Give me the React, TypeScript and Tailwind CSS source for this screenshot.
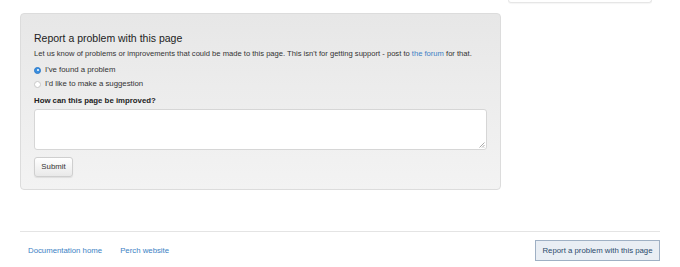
export default function App() {
  return (
    <div className="w-[680px] h-[267px] overflow-hidden bg-white text-[#333] font-['Liberation_Sans',Arial,sans-serif]">
      <div className="ml-[508px] w-[144px] h-[3px] border border-t-0 border-[#e6e6e6] rounded-b-[3px] shadow-[0_1px_1px_rgba(0,0,0,0.04)]" />

      <div className="ml-[20px] mt-[10px] w-[481px] h-[177px] rounded-[4px] border border-[#dcdcdc] bg-gradient-to-b from-[#e7e7e7] to-[#f3f3f3] px-[13px] pt-[18px]">
        <h2 className="text-[10.5px] leading-[12px] text-[#222]">Report a problem with this page</h2>
        <p className="mt-[4px] text-[7.6px] leading-[12px] text-[#333] whitespace-nowrap">
          Let us know of problems or improvements that could be made to this page. This isn't for getting support - post to{" "}
          <a className="text-[#3b7fc4]">the forum</a> for that.
        </p>

        <div className="mt-[3px] flex flex-col">
          <label className="flex items-center gap-[4px] h-[14px] text-[7.8px]">
            <span className="flex h-[7px] w-[7px] items-center justify-center rounded-full bg-[#3b8fe0] border border-[#2f7cc9]">
              <span className="h-[2px] w-[2px] rounded-full bg-white" />
            </span>
            <span>I've found a problem</span>
          </label>
          <label className="flex items-center gap-[4px] h-[14px] text-[7.8px]">
            <span className="h-[7px] w-[7px] rounded-full bg-white border border-[#c8c8c8]" />
            <span>I'd like to make a suggestion</span>
          </label>
        </div>

        <div className="mt-[4px] text-[7.8px] leading-[12px] font-bold text-[#222]">How can this page be improved?</div>

        <div className="relative mt-[2px] w-[453px] h-[41px] rounded-[3px] border border-[#d6d6d6] bg-white">
          <svg className="absolute right-[1px] bottom-[1px]" width="6" height="6" viewBox="0 0 6 6">
            <path d="M5.5 0.5 L0.5 5.5 M5.5 3 L3 5.5 M5.5 5 L5 5.5" stroke="#aaa" strokeWidth="1" />
          </svg>
        </div>

        <button className="mt-[7px] h-[20px] w-[39px] rounded-[3px] border border-[#cfcfcf] bg-gradient-to-b from-white to-[#e9e9e9] text-[7.8px] text-[#333] shadow-[0_1px_1px_rgba(0,0,0,0.08)]">
          Submit
        </button>
      </div>

      <div className="ml-[20px] mt-[41px] w-[640px] border-t border-[#e4e4e4]" />

      <div className="ml-[20px] w-[640px] flex items-center justify-between pt-[8px]">
        <div className="flex gap-[18px] pl-[8px] text-[7.8px] text-[#3b7fc4]">
          <a>Documentation home</a>
          <a>Perch website</a>
        </div>
        <button className="h-[21px] w-[125px] border border-[#9fb0c4] bg-[#e9eef4] text-[7.8px] text-[#2b4a6b] whitespace-nowrap">
          Report a problem with this page
        </button>
      </div>
    </div>
  );
}
